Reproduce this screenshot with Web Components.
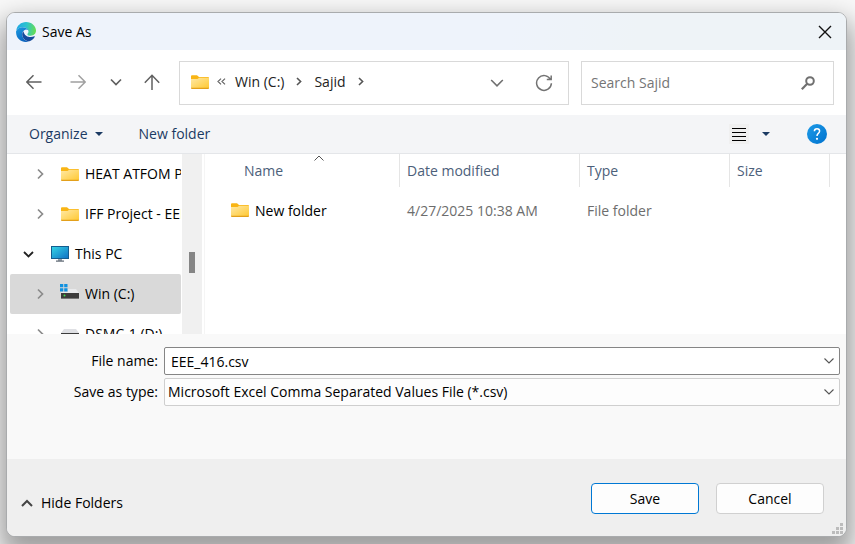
<!DOCTYPE html>
<html lang="en">
<head>
<meta charset="utf-8">
<title>Save As</title>
<style>
  html { height: 100%; background: #fff; }
  body {
    margin: 0; height: 100%; box-sizing: border-box; padding: 12px 8px 7px 6px;
    display: flex; overflow: hidden; background: #f8f8f8;
    font: 14px/20px "Open Sans", "Noto Sans", sans-serif; color: #000;
  }
</style>
</head>
<body>
<save-dialog></save-dialog>
<script>
const FOLDER = `<defs><linearGradient id="f" x1="0" y1="0" x2="1" y2="1"><stop offset="0" stop-color="#ffe9a6"/><stop offset="1" stop-color="#ffc934"/></linearGradient></defs>
  <path d="M0 1.200Q0 .2 1 .2H6L8 2H17Q18 2 18 3V6H0z" fill="#f9b515"/>
  <path d="M0 4H6.500L8.200 2.800H18V13H0z" fill="url(#f)"/><path d="M0 12.800H18V13.200Q18 14 17 14H1Q0 14 0 13.200z" fill="#e3a01b"/>`;
const ICONS = {
  back: [16, 16, '<path d="M15.500 8H1M7.500 1.300L.8 8L7.500 14.700" fill="none" stroke="#606060" stroke-width="1.500"/>'],
  forward: [16, 16, '<path d="M.5 8H15M8.500 1.300L15.200 8L8.500 14.700" fill="none" stroke="#a0a0a0" stroke-width="1.500"/>'],
  up: [16, 16, '<path d="M8 16V1.500M.8 8.700L8 1.300L15.200 8.700" fill="none" stroke="#606060" stroke-width="1.500"/>'],
  recent: [12, 8, '<path d="M1 1.500L6 6.500L11 1.500" fill="none" stroke="#606060" stroke-width="1.700"/>'],
  history: [14, 8, '<path d="M1.200 1L7 6.800L12.800 1" fill="none" stroke="#707070" stroke-width="1.600"/>'],
  crumb: [6, 9, '<path d="M1 1L4.600 4.500L1 8" fill="none" stroke="#555" stroke-width="1.600"/>'],
  more: [9, 7, '<path d="M4 .6L1 3.500L4 6.400M8 .6L5 3.500L8 6.400" fill="none" stroke="#666" stroke-width="1.200"/>'],
  refresh: [18, 18, '<path d="M15.600 5.600A7.400 7.400 0 1 0 16.400 9.200M16.200 1.500V5.600H11.800" fill="none" stroke="#737373" stroke-width="1.500"/>'],
  search: [14, 14, '<circle cx="9" cy="5" r="3.800" fill="none" stroke="#707070" stroke-width="2"/><path d="M6.200 7.800L.8 13.200" stroke="#707070" stroke-width="2.200"/>'],
  close: [14, 14, '<path d="M1 1L13 13M13 1L1 13" stroke="#111" stroke-width="1.400"/>'],
  caret: [8, 4, '<path d="M0 0H8L4 4z" fill="#1b3a63"/>'],
  view: [20, 20, '<path fill="#f0f0f0" d="M0 0H20V20H0z"/><path d="M3 4.500H17M3 8.500H17M3 12.500H17M3 16.500H17" stroke="#000"/>'],
  expand: [7, 12, '<path d="M1 1.500L5.500 6L1 10.500" fill="none" stroke="#8b8b8b" stroke-width="1.700"/>'],
  open: [11, 7, '<path d="M1 1L5.500 5.500L10 1" fill="none" stroke="#222" stroke-width="1.800"/>'],
  hide: [12, 8, '<path d="M1 7L6 2L11 7" fill="none" stroke="#444" stroke-width="2"/>'],
  drop: [10, 6, '<path d="M.5 .5L5 5L9.500 .5" fill="none" stroke="#555" stroke-width="1.100"/>'],
  sort: [10, 6, '<path d="M.5 5.500L5 1L9.500 5.500" fill="none" stroke="#555" stroke-width="1"/>'],
  folder: [18, 14, FOLDER],
  pc: [18, 16, `<defs><linearGradient id="m" x1="0" y1="0" x2="1" y2="1"><stop offset="0" stop-color="#35d6e6"/><stop offset="1" stop-color="#0f6fc4"/></linearGradient></defs>
    <path d="M7 13H11V15H7z" fill="#9aa2aa"/><rect x=".5" y=".5" width="17" height="12" fill="url(#m)" stroke="#155d8f"/><path d="M5 14.500H13V15.700H5z" fill="#5b6570"/>`],
  windrive: [19, 16, `<path d="M1 9L4 5H16L19 9z" fill="#e9eaec"/><path d="M1 9H19V15H1z" fill="#3c3c3c"/><path d="M1 14H19V15H1z" fill="#777"/><circle cx="4.500" cy="11.500" r="1" fill="#41e04b"/>
    <path d="M0 0H8V8H0z" fill="#d9d9d9"/><path d="M0 0H3.300V3.300H0zM4.200 0H7.500V3.300H4.200zM0 4.200H3.300V7.500H0zM4.200 4.200H7.500V7.500H4.200z" fill="#1191df"/>`],
  drive: [18, 10, '<path d="M0 4L3 0H15L18 4z" fill="#dfe0e4"/><path d="M0 4H18V10H0z" fill="#3c3c3c"/><circle cx="3.500" cy="6.500" r="1" fill="#41e04b"/>'],
  help: [20, 20, `<defs><linearGradient id="h" x1="0" y1="0" x2="1" y2="1"><stop offset="0" stop-color="#1d9be8"/><stop offset="1" stop-color="#0072ce"/></linearGradient></defs>
    <circle cx="10" cy="10" r="10" fill="url(#h)"/><path d="M7.400 7.200Q7.400 4.700 10 4.700Q12.600 4.700 12.600 7Q12.600 8.300 11.300 9.300Q10 10.300 10 12" fill="none" stroke="#fff" stroke-width="1.500"/><circle cx="10" cy="14.800" r="1.100" fill="#fff"/>`],
  edge: [20, 20, `<defs><linearGradient id="a" x1="0" y1=".3" x2="1" y2=".4"><stop offset="0" stop-color="#1fa7e4"/><stop offset=".5" stop-color="#2cc3cf"/><stop offset="1" stop-color="#66dd52"/></linearGradient>
    <linearGradient id="b" x1="0" y1="0" x2=".6" y2="1"><stop offset="0" stop-color="#1b9ce2"/><stop offset="1" stop-color="#0b62bd"/></linearGradient></defs>
    <path d="M.2 8.500C1 3.500 5 0 10 0C16 0 20 4.200 20 8.600C20 12 17.400 13.800 14.800 13.800C12.500 13.800 11.400 13 11.400 12.400C11.400 11.800 12.500 11.300 12.500 9.600C12.500 7.300 10 5.200 6.500 5.200C3.500 5.200 1.200 6.700 .2 8.500z" fill="url(#a)"/>
    <path d="M.1 9.200C1 6.600 3.700 5.200 6.500 5.200C9.500 5.200 11.800 6.700 12.400 8.500C11.700 7.700 10.700 7.400 9.800 7.500C7.500 8 6 10.300 6.200 12.800C6.500 16.500 9.600 19.300 13 19.500C6.500 21.500 -.6 17 .1 9.200z" fill="url(#b)"/>
    <path d="M7.500 9.200C6.300 10.300 6.100 12 6.300 13.300C7 17 10 19.500 13.500 19.300C15.700 18.600 17.800 16.800 18.800 14.800C19 14.300 18.600 14.100 18.200 14.300C15 16 8.500 15.200 7.500 9.200z" fill="#154a9c"/>`],
  grip: [11, 11, '<path d="M8 0H11V3H8zM4 4H7V7H4zM8 4H11V7H8zM0 8H3V11H0zM4 8H7V11H4zM8 8H11V11H8z" fill="#bcbcbc"/>'],
};

const BASE = `*{box-sizing:border-box} button,input,select{font:inherit;color:inherit;margin:0;padding:0;border:0;background:none;border-radius:0;outline:0}
  button{display:flex;align-items:center;justify-content:center;white-space:nowrap}`;

function define(tag, render) {
  customElements.define(tag, class extends HTMLElement {
    connectedCallback() {
      if (this.shadowRoot) return;
      const t = document.createElement('template');
      t.innerHTML = render(this);
      this.attachShadow({ mode: 'open' }).append(t.content.cloneNode(true));
    }
  });
}

define('ui-icon', el => {
  const [w, h, body] = ICONS[el.getAttribute('name')];
  return `<style>:host{display:block;flex:none}svg{display:block}</style>
    <svg width="${w}" height="${h}" viewBox="0 0 ${w} ${h}" aria-hidden="true">${body}</svg>`;
});

define('title-bar', () => `<style>${BASE}
    :host{display:flex;align-items:center;height:37px;padding:0 14px 0 9px;gap:6px;background:linear-gradient(100deg,#eef3fb 60%,#eef3f7 75%)}
    h1{margin:0;flex:1;font:inherit}</style>
  <ui-icon name="edge"></ui-icon><h1><slot></slot></h1>
  <button aria-label="Close"><ui-icon name="close"></ui-icon></button>`);

define('address-bar', () => `<style>${BASE}
    :host{display:flex;align-items:center;flex:1;min-width:0;height:44px;border:1px solid #d9d9d9;padding:0 15px 0 11px;background:#fff;color:#222}
    nav{display:flex;align-items:center;flex:1;gap:12px;padding-bottom:2px}
    nav ui-icon[name=more]{margin:0 -3px 0 -4px}
    .tools{display:flex;align-items:center;gap:31px}</style>
  <nav aria-label="Path"><ui-icon name="folder"></ui-icon><ui-icon name="more"></ui-icon>
    <button>Win (C:)</button><ui-icon name="crumb"></ui-icon><button>Sajid</button><ui-icon name="crumb"></ui-icon></nav>
  <div class="tools"><button aria-label="Previous locations"><ui-icon name="history"></ui-icon></button>
    <button aria-label="Refresh"><ui-icon name="refresh"></ui-icon></button></div>`);

define('search-box', () => `<style>${BASE}
    :host{display:flex;align-items:center;width:253px;height:44px;border:1px solid #d9d9d9;padding:0 18px 0 9px;background:#fff}
    input{flex:1;min-width:0;height:24px} input::placeholder{color:#757575;opacity:1}</style>
  <input type="text" placeholder="Search Sajid" aria-label="Search Sajid">
  <button aria-label="Search"><ui-icon name="search"></ui-icon></button>`);

define('nav-bar', () => `<style>${BASE}
    :host{display:flex;align-items:center;height:65px;padding:0 12px 0 5px;background:#fff}
    .moves{display:flex;margin-right:7px;padding-bottom:2px} button{width:44px;height:40px} .narrow{width:32px} .up{width:40px}
    search-box{margin-left:12px}</style>
  <div class="moves"><button aria-label="Back"><ui-icon name="back"></ui-icon></button>
    <button aria-label="Forward" disabled><ui-icon name="forward"></ui-icon></button>
    <button class="narrow" aria-label="Recent locations"><ui-icon name="recent"></ui-icon></button>
    <button class="up" aria-label="Up"><ui-icon name="up"></ui-icon></button></div>
  <address-bar></address-bar><search-box></search-box>`);

define('command-bar', () => `<style>${BASE}
    :host{display:flex;align-items:center;height:39px;padding:0 19px 0 22px;background:#f4f5f7;border-bottom:1px solid #e4e6e9;color:#1b3a63}
    .organize{gap:7px;margin-right:36px} .view{gap:13px;margin-left:auto;margin-right:37px}</style>
  <button class="organize">Organize <ui-icon name="caret"></ui-icon></button>
  <button>New folder</button>
  <button class="view" aria-label="Change your view"><ui-icon name="view"></ui-icon><ui-icon name="caret"></ui-icon></button>
  <button aria-label="Help"><ui-icon name="help"></ui-icon></button>`);

define('tree-item', el => `<style>${BASE}
    :host{display:flex;align-items:center;height:40px;flex:none;padding-left:25px;white-space:nowrap;overflow:hidden;border-radius:2px}
    :host([root]){padding-left:13px} :host([selected]){background:#d9d9d9}
    button{width:11px;height:24px;flex:none;margin-right:15px} :host([root]) button{margin-right:17px}
    .icon{width:18px;display:flex;justify-content:flex-end;margin-right:6px;flex:none}
    :host([selected]) .icon{padding-bottom:4px}</style>
  <button aria-label="Toggle"><ui-icon name="${el.hasAttribute('root') ? 'open' : 'expand'}"></ui-icon></button>
  <span class="icon"><ui-icon name="${el.getAttribute('icon')}"></ui-icon></span><span><slot></slot></span>`);

define('folder-tree', () => `<style>${BASE}
    :host{display:flex;width:198px;flex:none;overflow:hidden;border-right:1px solid #f5f5f5;padding-left:3px;padding-right:2px}
    .items{flex:1;min-width:0;display:flex;flex-direction:column;overflow:hidden;margin-right:1px}
    .track{width:20px;background:#f0f0f0;display:flex;justify-content:center;padding-top:98px}
    .thumb{width:6px;height:21px;background:#858585}</style>
  <div class="items" role="tree"><tree-item icon="folder">HEAT ATFOM P</tree-item>
    <tree-item icon="folder">IFF Project - EEE</tree-item>
    <tree-item icon="pc" root>This PC</tree-item>
    <tree-item icon="windrive" selected>Win (C:)</tree-item>
    <tree-item icon="drive">DSMC-1 (D:)</tree-item></div>
  <div class="track"><div class="thumb"></div></div>`);

define('file-list', () => `<style>${BASE}
    :host{display:block;flex:1;min-width:0;overflow:hidden}
    table{border-collapse:separate;border-spacing:0;table-layout:fixed;width:100%}
    th{position:relative;height:33px;padding:0 0 0 7px;font-weight:400;text-align:left;color:#4c607a;border-right:1px solid #e5e5e5}
    th:first-child{padding-left:39px} th:last-child{border:0}
    td{height:40px;padding:0 0 0 7px;color:#6d6d6d} td:first-child{padding-left:26px;color:#000}
    tbody::before{content:"";display:table-row;height:4px}
    .name{display:flex;align-items:center;gap:6px} .name ui-icon{padding-bottom:2px}
    .sort{position:absolute;top:1px;left:109px}
    .n{width:195px}.d{width:180px}.t{width:150px}.s{width:100px}</style>
  <table><colgroup><col class="n"><col class="d"><col class="t"><col class="s"><col></colgroup>
    <thead><tr><th>Name<ui-icon class="sort" name="sort"></ui-icon></th><th>Date modified</th><th>Type</th><th>Size</th><th></th></tr></thead>
    <tbody><tr><td><span class="name"><ui-icon name="folder"></ui-icon>New folder</span></td><td>4/27/2025 10:38 AM</td><td>File folder</td><td></td><td></td></tr></tbody></table>`);

define('save-fields', () => `<style>${BASE}
    :host{display:grid;grid-template-columns:auto 1fr;align-content:start;column-gap:6px;row-gap:3px;height:125px;padding:13px 6px 0 8px;background:#f9f9f9}
    label{width:143px;text-align:right;align-self:center}
    .box{display:grid;grid-template-columns:1fr 15px;align-items:center;height:28px;border:1px solid #858585;border-radius:2px;background:#fff}
    .box.type{border-color:#cfcfcf;background:#fdfdfd}
    .box > :first-child{grid-area:1/1/2/3;width:100%;height:26px;padding:0 22px 0 6px}
    .box > :last-child{grid-area:1/2/2/3;height:24px;justify-self:start}
    select{appearance:none} .box.type > select{padding-left:3px}
    .arrow{display:flex;align-items:center;pointer-events:none}</style>
  <label for="name">File name:</label>
  <div class="box"><input id="name" type="text" value="EEE_416.csv"><button aria-label="Previous names"><ui-icon name="drop"></ui-icon></button></div>
  <label for="type">Save as type:</label>
  <div class="box type"><select id="type"><option>Microsoft Excel Comma Separated Values File (*.csv)</option></select><span class="arrow"><ui-icon name="drop"></ui-icon></span></div>`);

define('dialog-footer', () => `<style>${BASE}
    :host{display:flex;align-items:center;position:relative;height:77px;padding:2px 22px 0 14px;gap:17px;background:#efefef}
    .hide{gap:8px;margin:9px auto 0 0}
    .action{width:108px;height:31px;border:1px solid #d0d0d0;border-radius:4px;background:#fdfdfd} .primary{border-color:#0078d4}
    .grip{position:absolute;right:3px;bottom:2px}</style>
  <button class="hide"><ui-icon name="hide"></ui-icon>Hide Folders</button>
  <button class="action primary">Save</button><button class="action">Cancel</button>
  <ui-icon class="grip" name="grip"></ui-icon>`);

define('save-dialog', () => `<style>${BASE}
    :host{display:flex;flex-direction:column;flex:1;min-width:0;overflow:hidden;border:1px solid #a9abad;border-radius:9px;background:#fff;
      box-shadow:0 14px 26px 6px rgba(0,0,0,.36)}
    title-bar,nav-bar,command-bar,save-fields,dialog-footer{flex:none}
    main{display:flex;flex:1;min-height:0;overflow:hidden}</style>
  <title-bar>Save As</title-bar><nav-bar></nav-bar><command-bar></command-bar>
  <main><folder-tree></folder-tree><file-list></file-list></main>
  <save-fields></save-fields><dialog-footer></dialog-footer>`);
</script>
</body>
</html>
